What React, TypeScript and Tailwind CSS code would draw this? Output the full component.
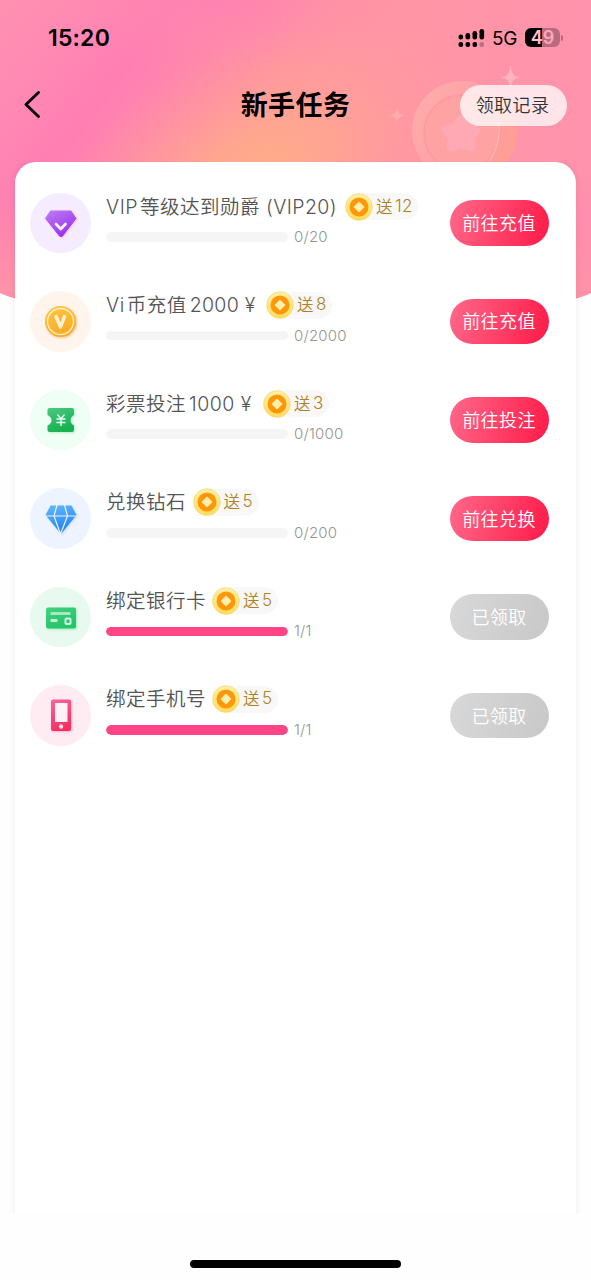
import type { ReactNode } from "react";

type IconKind = "vip" | "coin" | "ticket" | "diamond" | "card" | "phone";

interface Task {
  icon: IconKind;
  title: ReactNode;
  titleWidth: number;
  reward: number;
  rewardWidth: number;
  current: number;
  total: number;
  action: string;
}

const tasks: Task[] = [
  {
    icon: "vip",
    title: (
      <>
        <span className="mr-[2px]">VIP</span>等级达到勋爵<span className="ml-[6px] tracking-[0.4px]">(VIP20)</span>
      </>
    ),
    titleWidth: 239,
    reward: 12,
    rewardWidth: 73,
    current: 0,
    total: 20,
    action: "前往充值",
  },
  {
    icon: "coin",
    title: (
      <>
        <span className="mr-[2px]">Vi</span>币充值<span className="ml-[3px] tracking-[0.3px]">2000 ¥</span>
      </>
    ),
    titleWidth: 160,
    reward: 8,
    rewardWidth: 66,
    current: 0,
    total: 2000,
    action: "前往充值",
  },
  {
    icon: "ticket",
    title: (
      <>
        彩票投注<span className="ml-[3px]">1000 ¥</span>
      </>
    ),
    titleWidth: 157,
    reward: 3,
    rewardWidth: 66,
    current: 0,
    total: 1000,
    action: "前往投注",
  },
  { icon: "diamond", title: "兑换钻石", titleWidth: 86.5, reward: 5, rewardWidth: 66, current: 0, total: 200, action: "前往兑换" },
  { icon: "card", title: "绑定银行卡", titleWidth: 106, reward: 5, rewardWidth: 66, current: 1, total: 1, action: "已领取" },
  { icon: "phone", title: "绑定手机号", titleWidth: 106, reward: 5, rewardWidth: 66, current: 1, total: 1, action: "已领取" },
];

const iconBg: Record<IconKind, string> = {
  vip: "bg-[#f5ecff]",
  coin: "bg-[#fff5ec]",
  ticket: "bg-[#effff5]",
  diamond: "bg-[#edf4ff]",
  card: "bg-[#e8f9ef]",
  phone: "bg-[#ffebf2]",
};

function HeaderArt() {
  return (
    <svg className="absolute left-0 top-0" width="591" height="330" viewBox="0 0 591 330">
      <defs>
        <clipPath id="curve">
          <path d="M0 0H591V293Q560 306 500 314Q295 338 91 314Q31 306 0 293Z" />
        </clipPath>
        <linearGradient id="sweep" gradientUnits="userSpaceOnUse" x1="10" y1="0" x2="270" y2="200">
          <stop offset="0" stopColor="#ff90b2" />
          <stop offset="0.2" stopColor="#ff89b3" />
          <stop offset="0.4" stopColor="#ff7eb3" />
          <stop offset="0.58" stopColor="#ff88ab" />
          <stop offset="0.78" stopColor="#ff94a2" />
          <stop offset="1" stopColor="#ff97a2" />
        </linearGradient>
        <radialGradient id="orange" gradientUnits="userSpaceOnUse" cx="0" cy="0" r="1" gradientTransform="translate(265 178) rotate(-30) scale(265 140)">
          <stop offset="0" stopColor="#ffae87" />
          <stop offset="0.3" stopColor="#ffaa8b" stopOpacity="0.85" />
          <stop offset="0.65" stopColor="#ffa095" stopOpacity="0.45" />
          <stop offset="1" stopColor="#ff98a0" stopOpacity="0" />
        </radialGradient>
        <linearGradient id="right" x1="0" y1="0" x2="1" y2="0">
          <stop offset="0.45" stopColor="#ff94a8" stopOpacity="0" />
          <stop offset="1" stopColor="#ff93ad" />
        </linearGradient>
        <radialGradient id="top" gradientUnits="userSpaceOnUse" cx="0" cy="0" r="1" gradientTransform="translate(220 -5) scale(180 75)">
          <stop offset="0" stopColor="#ff82b1" />
          <stop offset="1" stopColor="#ff8dab" stopOpacity="0" />
        </radialGradient>
        <linearGradient id="bottom" x1="0" y1="0" x2="0" y2="1">
          <stop offset="0.5" stopColor="#ff84ae" stopOpacity="0" />
          <stop offset="0.88" stopColor="#ff92a8" />
        </linearGradient>
        <linearGradient id="medal" x1="0" y1="0" x2="1" y2="0.6">
          <stop offset="0" stopColor="#ffafab" />
          <stop offset="0.6" stopColor="#ffa0a7" />
          <stop offset="1" stopColor="#ff9e96" />
        </linearGradient>
      </defs>
      <g clipPath="url(#curve)">
        <rect width="591" height="330" fill="url(#sweep)" />
        <rect width="591" height="330" fill="url(#orange)" />
        <rect width="591" height="330" fill="url(#top)" />
        <rect width="591" height="330" fill="url(#right)" />
        <rect width="591" height="330" fill="url(#bottom)" />
        <circle cx="467" cy="132" r="50" fill="#ff9e96" />
        <circle cx="462" cy="131" r="50" fill="url(#medal)" />
        <circle cx="462" cy="133" r="38" fill="#ffa2a3" stroke="#ff9a9b" strokeWidth="1.500" />
        <path d="M461 120L466 128.500L475 130L468.500 137L470 146L461 142L452 146L453.500 137L447 130L456 128.500Z" fill="#ffa9b5" stroke="#ffa9b5" strokeWidth="11" strokeLinejoin="round" />
        <path d="M498 118Q503 142 489 162" fill="none" stroke="#ffbdb8" strokeWidth="1" />
        <path d="M510.500 66Q511 77 519 77.500Q511 78 510.500 89Q510 78 502 77.500Q510 77 510.500 66Z" fill="#ffb3bd" stroke="#ffb3bd" strokeWidth="0.600" />
        <path d="M397 107Q397.500 115 405 115.500Q397.500 116 397 123Q396.500 116 389 115.500Q396.500 115 397 107Z" fill="#ffacaa" />
      </g>
    </svg>
  );
}

function StatusBar() {
  return (
    <div className="flex h-[54px] items-end justify-between pl-[48px] pr-[28px] text-black">
      <span className="h-[31px] text-[23px] font-semibold leading-[30px] tracking-[0.2px]">15:20</span>
      <div className="flex h-[33px] items-center">
        <svg width="27" height="20" viewBox="0 0 27 20">
          <rect x="0.500" y="6.500" width="4.600" height="5" rx="2.200" />
          <rect x="7.500" y="5" width="4.600" height="6.500" rx="2.200" />
          <rect x="14.500" y="3" width="4.600" height="8.500" rx="2.200" />
          <rect x="21.500" y="1" width="4.600" height="10.500" rx="2.200" />
          <rect x="0.500" y="14" width="4.600" height="5" rx="2" />
          <rect x="7.500" y="14" width="4.600" height="5" rx="2" />
          <rect x="14.500" y="14" width="4.600" height="5" rx="2" />
          <rect x="21.500" y="14" width="4.600" height="5" rx="2" opacity="0.250" />
        </svg>
        <span className="ml-[7px] w-[26px] pt-px text-[19px] leading-none tracking-[-0.3px]">5G</span>
        <div className="ml-[7px] flex h-[19px] w-[35px] items-center justify-center rounded-[6px] bg-[linear-gradient(90deg,#000_0_17px,#b86b7e_17px)] text-[18px] font-semibold leading-none">
          <span className="text-[#ffc0cc]">4</span>
          <span className="text-[#ffa5b9]">9</span>
        </div>
        <div className="ml-px h-[6px] w-[2px] rounded-r-full bg-[#b86b7e]" />
      </div>
    </div>
  );
}

function TaskIcon({ kind }: { kind: IconKind }) {
  return (
    <div className={`h-[60.5px] w-[61px] shrink-0 rounded-full ${iconBg[kind]}`}>
      <svg width="61" height="61" viewBox="0 0 61 61">
        {kind === "vip" && (
          <g>
            <defs>
              <linearGradient id="vipFill" x1="0" y1="0" x2="0.600" y2="1">
                <stop stopColor="#bd7cf4" />
                <stop offset="1" stopColor="#9930f0" />
              </linearGradient>
            </defs>
            <path className="drop-shadow-[1px_1px_1px_#ffc5d1]" d="M20.500 18H41L46 25.500L32.500 43Q31 44.500 29.500 43L15.500 25.500Z" fill="url(#vipFill)" stroke="url(#vipFill)" strokeLinejoin="round" />
            <path d="M26 31L30.800 36L35.500 31" fill="none" stroke="#fff2f8" strokeWidth="2.800" strokeLinecap="round" strokeLinejoin="round" />
          </g>
        )}
        {kind === "coin" && (
          <g>
            <defs>
              <linearGradient id="coinFill" x1="0" y1="0" x2="0.400" y2="1">
                <stop stopColor="#ffc944" />
                <stop offset="1" stopColor="#faab25" />
              </linearGradient>
            </defs>
            <circle className="drop-shadow-[1px_1px_1px_#f9c58e]" cx="30.500" cy="30.500" r="15.500" fill="url(#coinFill)" />
            <circle cx="30.500" cy="30.500" r="13" fill="none" stroke="#fff0cd" strokeWidth="1.300" />
            <path d="M26 25.500L30.500 36L34.500 25.500" fill="none" stroke="#fff0dc" strokeWidth="3.400" strokeLinejoin="round" strokeLinecap="round" />
          </g>
        )}
        {kind === "ticket" && (
          <g>
            <defs>
              <linearGradient id="ticketFill" x1="0" y1="0" x2="0.400" y2="1">
                <stop stopColor="#4cc782" />
                <stop offset="1" stopColor="#16b250" />
              </linearGradient>
            </defs>
            <path className="drop-shadow-[1px_1px_1px_#b4edc8]" d="M19.500 18H42Q44 18 44 20V25Q40.500 27 40.500 30.500Q40.500 33.500 44 35.500V40Q44 42 42 42H19.500Q17.500 42 17.500 40V35.500Q21.500 33.500 21.500 30.500Q21.500 27 17.500 25V20Q17.500 18 19.500 18Z" fill="url(#ticketFill)" />
            <path d="M27.500 24.500L31 28.700L34.500 24.500M26.500 29H35.500M26.500 32.500H35.500M31 29V36" fill="none" stroke="#e9fff1" strokeWidth="1.400" />
          </g>
        )}
        {kind === "diamond" && (
          <g>
            <defs>
              <linearGradient id="gemFill" x1="0" y1="0" x2="0.300" y2="1">
                <stop stopColor="#64b9fa" />
                <stop offset="1" stopColor="#2283ef" />
              </linearGradient>
            </defs>
            <path className="drop-shadow-[1px_1px_1px_#c7dcff]" d="M20.500 17.500H41.500L46.500 27L31 46L15.500 27Z" fill="url(#gemFill)" />
            <path d="M15.500 28H46.500M27 17L24 28L30.500 46L37.500 28L34.500 17" fill="none" stroke="#edf4ff" strokeWidth="1.200" />
          </g>
        )}
        {kind === "card" && (
          <g>
            <defs>
              <linearGradient id="cardFill" x1="0" y1="0" x2="0.600" y2="1">
                <stop stopColor="#45cf80" />
                <stop offset="1" stopColor="#22c568" />
              </linearGradient>
            </defs>
            <rect className="drop-shadow-[1px_1px_1px_#a3e8be]" x="16" y="20.500" width="30" height="21" rx="2" fill="url(#cardFill)" />
            <rect x="20.500" y="25" width="20" height="3" rx="0.500" fill="#a5e9c1" />
            <rect x="20.500" y="32" width="7" height="3" rx="1" fill="#c9f4da" />
            <rect x="35.500" y="31.500" width="5" height="5.500" rx="1" fill="none" stroke="#d7f8e4" strokeWidth="2" />
          </g>
        )}
        {kind === "phone" && (
          <g>
            <defs>
              <linearGradient id="phoneFill" x1="0" y1="0" x2="0.300" y2="1">
                <stop stopColor="#f4689c" />
                <stop offset="1" stopColor="#f92e61" />
              </linearGradient>
            </defs>
            <rect className="drop-shadow-[1px_1px_1px_#ffb3c7]" x="21" y="14.500" width="20" height="31.500" rx="2" fill="url(#phoneFill)" />
            <rect x="25" y="18" width="12.500" height="19" fill="#fff1f6" />
            <circle cx="31" cy="41.500" r="2.200" fill="#ffe1ea" />
          </g>
        )}
      </svg>
    </div>
  );
}

function RewardBadge({ amount, width }: { amount: number; width: number }) {
  return (
    <div className="flex h-[27px] items-center rounded-full bg-[#f8f8f8] text-[#b08122]" style={{ width }}>
      <svg className="shrink-0" width="28" height="28" viewBox="0 0 28 28">
        <defs>
          <linearGradient id="rimFill" x1="0" y1="0" x2="0" y2="1">
            <stop stopColor="#fff0a6" />
            <stop offset="1" stopColor="#ffdc5c" />
          </linearGradient>
        </defs>
        <circle cx="14" cy="14" r="13.300" fill="url(#rimFill)" stroke="#f6d66a" strokeWidth="0.700" />
        <circle cx="14" cy="14" r="9.500" fill="#ff9708" />
        <path d="M14 9.500L18.500 14L14 18.500L9.500 14Z" fill="#fff0ad" stroke="#fff0ad" strokeWidth="1.500" strokeLinejoin="round" />
      </svg>
      <span className="ml-[3px] h-[18px] text-[16.500px] font-[350] leading-[18px]">送</span>
      <span className="ml-[2.5px] h-[18px] text-[17px] font-[350] leading-[17px] tracking-[0.2px]">{amount}</span>
    </div>
  );
}

function TaskRow({ task }: { task: Task }) {
  const done = task.current >= task.total;
  return (
    <div className="flex h-[60.5px] items-center pl-[15px] pr-[27.5px]">
      <TaskIcon kind={task.icon} />
      <div className="ml-[15px] flex h-full flex-1 flex-col">
        <div className="flex h-[28px] items-center">
          <div className="shrink-0 whitespace-nowrap text-[19.500px] font-[350] leading-[28px] tracking-[0.5px] text-[#555]" style={{ width: task.titleWidth }}>
            {task.title}
          </div>
          <RewardBadge amount={task.reward} width={task.rewardWidth} />
        </div>
        <div className="mt-[6.5px] flex h-[20px] items-center">
          <div className="h-[9.5px] w-[182px] overflow-hidden rounded-full bg-[#f5f5f5]">
            <div className="h-full rounded-full bg-[#ff4585]" style={{ width: `${(task.current / task.total) * 100}%` }} />
          </div>
          <span className="ml-[6px] text-[15px] font-[350] leading-[20px] tracking-[0.2px] text-[#959595]">
            {task.current}/{task.total}
          </span>
        </div>
      </div>
      <button
        className={`h-[45.5px] w-[99px] shrink-0 rounded-full pt-[2px] text-[18px] font-[350] leading-none tracking-[0.4px] text-white ${
          done ? "bg-[linear-gradient(105deg,#d8d8d8,#c8c8c8)]" : "bg-[linear-gradient(105deg,#ff6486_5%,#ff1e4b_95%)]"
        }`}
      >
        {task.action}
      </button>
    </div>
  );
}

export default function App() {
  return (
    <div className="relative flex h-[1280px] w-[591px] flex-col overflow-hidden bg-[#fefefe] font-['Inter','Noto_Sans_CJK_SC',sans-serif]">
      <HeaderArt />
      <header className="relative h-[162px] shrink-0">
        <StatusBar />
        <div className="mt-[30px] grid h-[42px] grid-cols-[1fr_auto_1fr] items-center pl-[24px] pr-[24px]">
          <svg className="-mt-[2px]" width="18" height="28" viewBox="0 0 18 28" fill="none" stroke="#000" strokeWidth="2.800" strokeLinecap="round" strokeLinejoin="round">
            <path d="M14.500 2.500L2 14.500L14.500 26.500" />
          </svg>
          <h1 className="text-[27px] font-semibold leading-none tracking-[0.4px] text-black">新手任务</h1>
          <button className="h-[41px] w-[107px] justify-self-end rounded-full bg-white/75 pr-[2px] pt-[2px] text-[18px] font-[350] leading-none tracking-[0.4px] text-[#333]">领取记录</button>
        </div>
      </header>
      <div className="relative h-[1051px] shrink-0 overflow-hidden px-[15px]">
        <main className="flex h-[1080px] flex-col gap-[38.1px] rounded-t-[21px] bg-white pt-[30.5px] shadow-[0_0_7px_rgba(0,0,0,0.08)]">
          {tasks.map((task) => (
            <TaskRow key={task.icon} task={task} />
          ))}
        </main>
      </div>
      <div className="mx-auto mt-[47px] h-[8px] w-[211px] shrink-0 rounded-full bg-black" />
    </div>
  );
}
